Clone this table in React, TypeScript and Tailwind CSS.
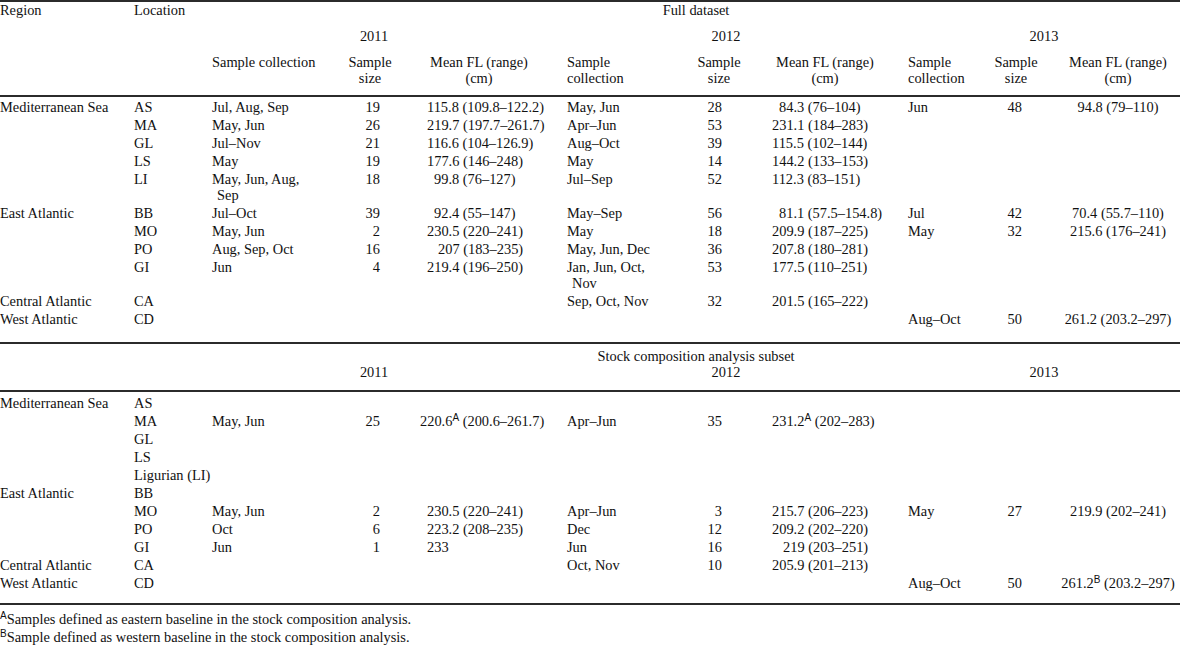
type Val = string | { t: string; sup?: string; pl?: string };

const m = (t: string, pl = "", sup?: string): Val => ({ t, pl, sup });

// per column cell classes (data rows)
const colCls = [
  "whitespace-nowrap",
  "whitespace-nowrap",
  "pl-[5px] [text-indent:-5px]",
  "text-right pr-[20px] whitespace-nowrap",
  "whitespace-nowrap",
  "pl-[5px] [text-indent:-5px]",
  "text-right pr-[20px] whitespace-nowrap",
  "whitespace-nowrap",
  "whitespace-nowrap",
  "text-right pr-[20px] whitespace-nowrap",
  "text-center pl-[14px] whitespace-nowrap",
];

// default left padding for mean FL columns
const basePl: Record<number, string> = { 4: "pl-[27px]", 7: "pl-[30px]" };

const full: Val[][] = [
  ["Mediterranean Sea", "AS", "Jul, Aug, Sep", "19", m("115.8 (109.8–122.2)"), "May, Jun", "28", m("84.3 (76–104)", "pl-[37px]"), "Jun", "48", "94.8 (79–110)"],
  ["", "MA", "May, Jun", "26", m("219.7 (197.7–261.7)"), "Apr–Jun", "53", m("231.1 (184–283)"), "", "", ""],
  ["", "GL", "Jul–Nov", "21", m("116.6 (104–126.9)"), "Aug–Oct", "39", m("115.5 (102–144)"), "", "", ""],
  ["", "LS", "May", "19", m("177.6 (146–248)"), "May", "14", m("144.2 (133–153)"), "", "", ""],
  ["", "LI", "May, Jun, Aug, Sep", "18", m("99.8 (76–127)", "pl-[34px]"), "Jul–Sep", "52", m("112.3 (83–151)"), "", "", ""],
  ["East Atlantic", "BB", "Jul–Oct", "39", m("92.4 (55–147)", "pl-[34px]"), "May–Sep", "56", m("81.1 (57.5–154.8)", "pl-[37px]"), "Jul", "42", "70.4 (55.7–110)"],
  ["", "MO", "May, Jun", "2", m("230.5 (220–241)"), "May", "18", m("209.9 (187–225)"), "May", "32", "215.6 (176–241)"],
  ["", "PO", "Aug, Sep, Oct", "16", m("207 (183–235)", "pl-[38px]"), "May, Jun, Dec", "36", m("207.8 (180–281)"), "", "", ""],
  ["", "GI", "Jun", "4", m("219.4 (196–250)"), "Jan, Jun, Oct, Nov", "53", m("177.5 (110–251)"), "", "", ""],
  ["Central Atlantic", "CA", "", "", "", "Sep, Oct, Nov", "32", m("201.5 (165–222)"), "", "", ""],
  ["West Atlantic", "CD", "", "", "", "", "", "", "Aug–Oct", "50", "261.2 (203.2–297)"],
];

const subset: Val[][] = [
  ["Mediterranean Sea", "AS", "", "", "", "", "", "", "", "", ""],
  ["", "MA", "May, Jun", "25", m("220.6", "pl-[20px]", "A"), "Apr–Jun", "35", m("231.2", "", "A"), "", "", ""],
  ["", "GL", "", "", "", "", "", "", "", "", ""],
  ["", "LS", "", "", "", "", "", "", "", "", ""],
  ["", "Ligurian (LI)", "", "", "", "", "", "", "", "", ""],
  ["East Atlantic", "BB", "", "", "", "", "", "", "", "", ""],
  ["", "MO", "May, Jun", "2", m("230.5 (220–241)"), "Apr–Jun", "3", m("215.7 (206–223)"), "May", "27", "219.9 (202–241)"],
  ["", "PO", "Oct", "6", m("223.2 (208–235)"), "Dec", "12", m("209.2 (202–220)"), "", "", ""],
  ["", "GI", "Jun", "1", m("233"), "Jun", "16", m("219 (203–251)", "pl-[41px]"), "", "", ""],
  ["Central Atlantic", "CA", "", "", "", "Oct, Nov", "10", m("205.9 (201–213)"), "", "", ""],
  ["West Atlantic", "CD", "", "", "", "", "", "", "Aug–Oct", "50", m("261.2", "", "B")],
];

// the rest of the text after a superscript value
const tails: Record<string, string> = {
  "220.6": " (200.6–261.7)",
  "231.2": " (202–283)",
  "261.2": " (203.2–297)",
};

const Rule = () => (
  <tr>
    <td colSpan={11} className="p-0">
      <div className="h-[2px] bg-[#2b2b2b]" />
    </td>
  </tr>
);

const Cell = ({ v, i, cls }: { v: Val; i: number; cls: string }) => {
  if (typeof v === "string") {
    return <td className={`p-0 align-top ${colCls[i]} ${cls}`}>{v}</td>;
  }
  const pl = v.pl || basePl[i] || "";
  return (
    <td className={`p-0 align-top ${colCls[i]} ${pl} ${cls}`}>
      {v.t}
      {v.sup && <sup className="text-[10px] font-['Liberation_Sans',sans-serif]">{v.sup}</sup>}
      {v.sup && tails[v.t]}
    </td>
  );
};

const Rows = ({ rows, first, last }: { rows: Val[][]; first: string; last: string }) => (
  <>
    {rows.map((r, ri) => {
      const pad = ri === 0 ? first : ri === rows.length - 1 ? last : "pt-[2px]";
      return (
        <tr key={ri}>
          {r.map((v, i) => (
            <Cell key={i} v={v} i={i} cls={pad} />
          ))}
        </tr>
      );
    })}
  </>
);

const Hd = ({ children, cls = "" }: { children?: React.ReactNode; cls?: string }) => (
  <td className={`p-0 align-top pt-[2px] pb-[9px] ${cls}`}>{children}</td>
);

export default function App() {
  return (
    <div className="w-[1180px] h-[647px] overflow-hidden bg-white text-[14.4px] leading-[16px] text-[#111] font-['Liberation_Serif',serif]">
      <table className="w-[1180px] table-fixed border-separate border-spacing-0">
        <colgroup>
          <col className="w-[134px]" />
          <col className="w-[78px]" />
          <col className="w-[106px]" />
          <col className="w-[82px]" />
          <col className="w-[167px]" />
          <col className="w-[103px]" />
          <col className="w-[72px]" />
          <col className="w-[166px]" />
          <col className="w-[82px]" />
          <col className="w-[52px]" />
          <col className="w-[138px]" />
        </colgroup>
        <tbody>
          <Rule />
          {/* Full dataset header */}
          <tr>
            <td className="p-0 pb-[8px] align-top">Region</td>
            <td className="p-0 pb-[8px] align-top">Location</td>
            <td colSpan={9} className="p-0 pb-[8px] align-top text-center">
              Full dataset
            </td>
          </tr>
          <tr>
            <td className="p-0" />
            <td className="p-0" />
            <td colSpan={3} className="p-0 pt-[2px] pb-[8px] text-center pr-[31px]">2011</td>
            <td colSpan={3} className="p-0 pt-[2px] pb-[8px] text-center pr-[23px]">2012</td>
            <td colSpan={3} className="p-0 pt-[2px] pb-[8px] text-center">2013</td>
          </tr>
          <tr>
            <Hd />
            <Hd />
            <Hd cls="whitespace-nowrap">Sample collection</Hd>
            <Hd cls="text-center pl-[22px]">Sample size</Hd>
            <Hd cls="text-center pr-[9px]">
              Mean FL (range)
              <br />
              (cm)
            </Hd>
            <Hd>Sample collection</Hd>
            <Hd cls="text-center pl-[26px]">Sample size</Hd>
            <Hd cls="text-center">
              Mean FL (range)
              <br />
              (cm)
            </Hd>
            <Hd>Sample collection</Hd>
            <Hd cls="text-center">Sample size</Hd>
            <Hd cls="text-center pl-[14px]">
              Mean FL (range)
              <br />
              (cm)
            </Hd>
          </tr>
          <Rule />
          <Rows rows={full} first="pt-[2px]" last="pt-[2px] pb-[15px]" />
          <Rule />
          {/* Stock composition subset header */}
          <tr>
            <td className="p-0 pt-[4px]" />
            <td className="p-0 pt-[4px]" />
            <td colSpan={9} className="p-0 pt-[4px] text-center">
              Stock composition analysis subset
            </td>
          </tr>
          <tr>
            <td className="p-0 pb-[10px]" />
            <td className="p-0 pb-[10px]" />
            <td colSpan={3} className="p-0 pb-[10px] text-center pr-[31px]">2011</td>
            <td colSpan={3} className="p-0 pb-[10px] text-center pr-[23px]">2012</td>
            <td colSpan={3} className="p-0 pb-[10px] text-center">2013</td>
          </tr>
          <Rule />
          <Rows rows={subset} first="pt-[3px]" last="pt-[2px] pb-[12px]" />
          <Rule />
        </tbody>
      </table>
      <div className="pt-[5px] leading-[18px]">
        <p>
          <sup className="text-[10px] font-['Liberation_Sans',sans-serif]">A</sup>
          Samples defined as eastern baseline in the stock composition analysis.
        </p>
        <p>
          <sup className="text-[10px] font-['Liberation_Sans',sans-serif]">B</sup>
          Sample defined as western baseline in the stock composition analysis.
        </p>
      </div>
    </div>
  );
}
